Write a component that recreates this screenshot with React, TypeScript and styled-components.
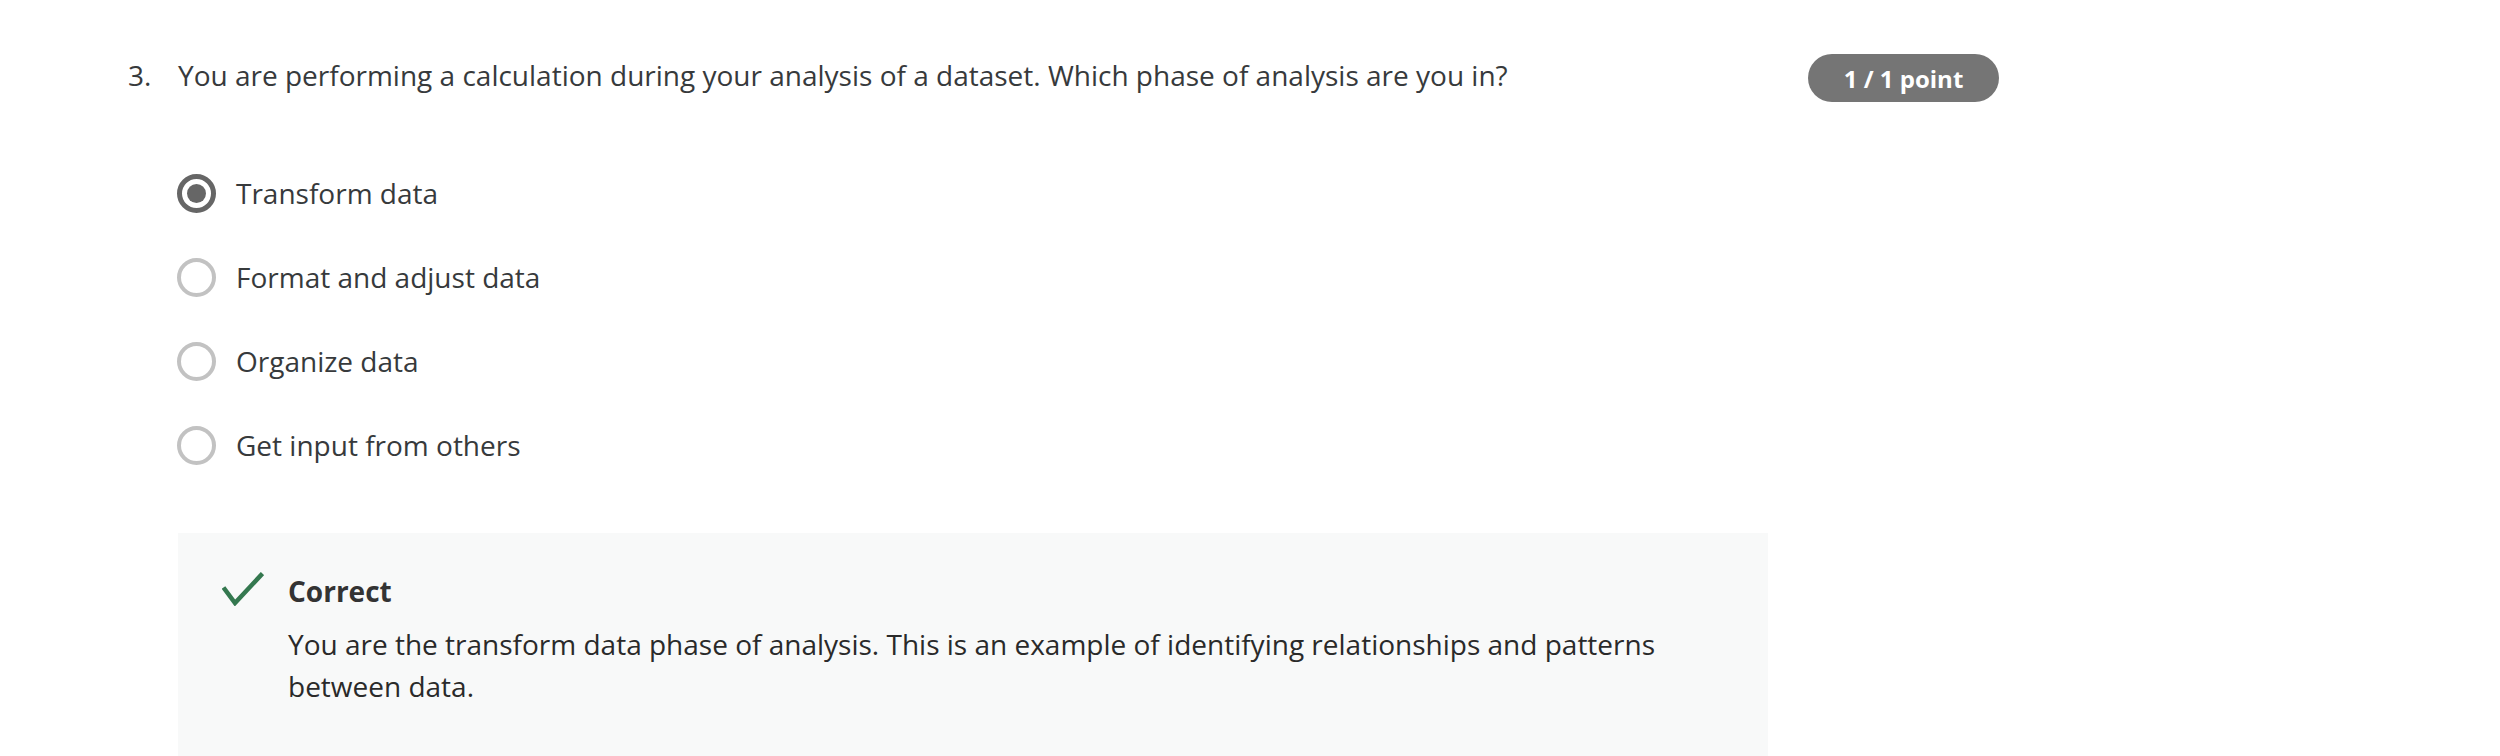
import React from "react";
import styled, { createGlobalStyle } from "styled-components";

const GlobalStyle = createGlobalStyle`
  html, body {
    margin: 0;
    padding: 0;
    background: #ffffff;
  }
  body {
    font-family: "Open Sans", "Noto Sans", Arial, sans-serif;
    color: #373a3c;
  }
`;

const Page = styled.div`
  padding: 54px 0 0 128px;
  width: 1871px;
`;

const QuestionGrid = styled.div`
  display: grid;
  grid-template-columns: 50px 1590px 231px;
  align-items: start;
`;

const Number = styled.div`
  font-size: 28px;
  line-height: 42px;
  color: #373a3c;
`;

const Prompt = styled.div`
  font-size: 28px;
  line-height: 42px;
  color: #373a3c;
`;

const Badge = styled.div`
  margin-left: 40px;
  width: 191px;
  height: 48px;
  border-radius: 24px;
  background: #757575;
  color: #ffffff;
  font-weight: 700;
  font-size: 24px;
  display: flex;
  align-items: center;
  justify-content: center;
  box-sizing: border-box;
`;

const Body = styled.div`
  grid-column: 2 / 3;
`;

const Options = styled.div`
  display: flex;
  flex-direction: column;
  margin-top: 49px;
  margin-left: -1px;
`;

const OptionRow = styled.label`
  display: flex;
  align-items: center;
  height: 84px;
  gap: 20px;
  font-size: 28px;
  line-height: 42px;
  color: #373a3c;
`;

const Radio = styled.span<{ $checked?: boolean }>`
  box-sizing: border-box;
  width: 39px;
  height: 39px;
  border-radius: 50%;
  border: ${(p) => (p.$checked ? "5px solid #666666" : "4px solid #c2c2c2")};
  display: flex;
  align-items: center;
  justify-content: center;
  flex: none;
  &::after {
    content: "";
    display: ${(p) => (p.$checked ? "block" : "none")};
    width: 19px;
    height: 19px;
    border-radius: 50%;
    background: #666666;
  }
`;

const Feedback = styled.div`
  margin-top: 46px;
  background: #f8f9f9;
  display: flex;
  align-items: flex-start;
  padding: 40px 60px 70px 44px;
  gap: 24px;
`;

const CheckIcon = styled.svg`
  flex: none;
  margin-top: -1px;
`;

const FeedbackText = styled.div`
  display: flex;
  flex-direction: column;
  gap: 14px;
`;

const FeedbackTitle = styled.div`
  font-size: 28px;
  line-height: 36px;
  font-weight: 700;
  color: #333333;
`;

const FeedbackBody = styled.div`
  font-size: 28px;
  line-height: 42px;
  color: #2a2a2a;
`;

const options = [
  { label: "Transform data", checked: true },
  { label: "Format and adjust data", checked: false },
  { label: "Organize data", checked: false },
  { label: "Get input from others", checked: false },
];

export default function App() {
  return (
    <>
      <GlobalStyle />
      <Page>
        <QuestionGrid>
          <Number>3.</Number>
          <Prompt>
            You are performing a calculation during your analysis of a dataset. Which phase of analysis are you in?
          </Prompt>
          <Badge>1 / 1 point</Badge>
          <Body>
            <Options>
              {options.map((o) => (
                <OptionRow key={o.label}>
                  <Radio $checked={o.checked} />
                  <span>{o.label}</span>
                </OptionRow>
              ))}
            </Options>
            <Feedback>
              <CheckIcon width="42" height="34" viewBox="0 0 42 34">
                <polyline
                  points="1.5,15.5 13,31 40.5,1.5"
                  fill="none"
                  stroke="#34784f"
                  strokeWidth="4.5"
                />
              </CheckIcon>
              <FeedbackText>
                <FeedbackTitle>Correct</FeedbackTitle>
                <FeedbackBody>
                  You are the transform data phase of analysis. This is an example of identifying relationships and patterns between data.
                </FeedbackBody>
              </FeedbackText>
            </Feedback>
          </Body>
        </QuestionGrid>
      </Page>
    </>
  );
}
